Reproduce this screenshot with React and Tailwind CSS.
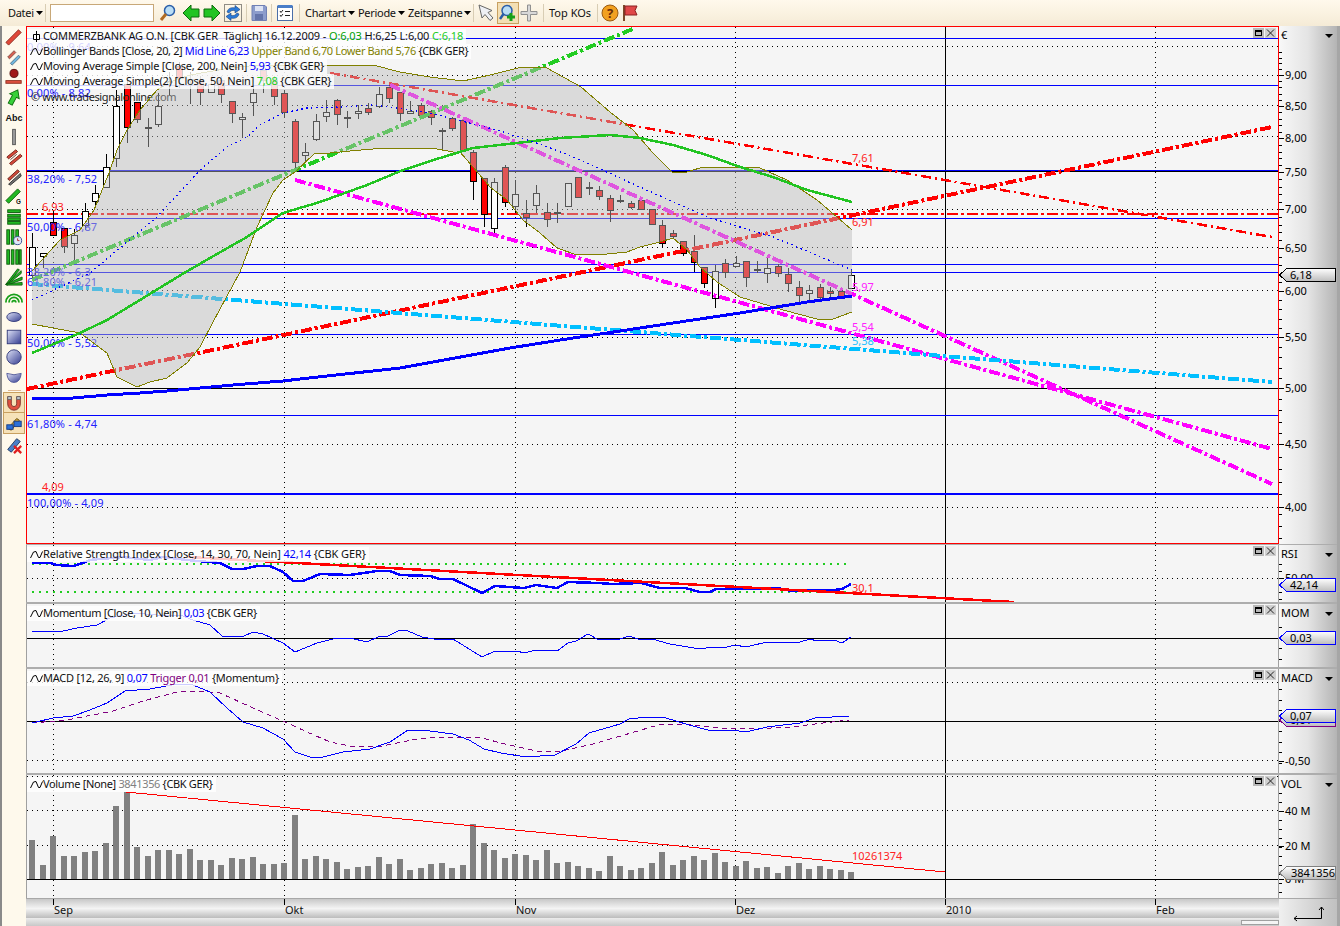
import React from 'react';

// one bar every 10.5px, first one at x=32
const barX = (i) => Math.round(32 + i * 10.5);

// top, bottom, high, low, kind (w white, r red, d doji)
const candles = [
  [247,275,233,280,'w'],[253,256,253,268,'w'],[222,235,210,235,'r'],[228,246,228,253,'r'],[235,243,229,260,'w'],
  [211,225,203,230,'w'],[193,201,185,207,'w'],[167,187,154,187,'w'],[106,158,90,167,'w'],[84,127,80,143,'r'],
  [102,119,102,123,'r'],[128,128,118,147,'d'],[106,124,93,127,'w'],[82,82,72,95,'d'],[66,78,62,88,'r'],
  [80,80,72,104,'d'],[80,92,76,105,'r'],[84,92,80,93,'w'],[80,94,76,103,'r'],[101,113,101,123,'r'],
  [117,119,113,138,'w'],[93,102,85,116,'w'],[70,80,64,93,'r'],[80,96,76,105,'r'],[93,112,90,117,'r'],
  [121,162,119,172,'r'],[152,155,143,162,'w'],[121,139,114,141,'w'],[112,116,100,122,'w'],[100,114,99,125,'r'],
  [118,118,111,128,'d'],[111,113,105,119,'w'],[108,112,103,115,'r'],[94,106,87,108,'w'],[87,98,85,103,'r'],
  [92,113,92,121,'r'],[111,113,101,113,'w'],[105,115,103,118,'r'],[111,117,110,125,'r'],[131,131,128,151,'d'],
  [118,128,117,131,'r'],[120,150,120,151,'r'],[152,181,150,200,'r'],[178,214,178,227,'r'],[182,228,178,236,'w'],
  [167,202,165,207,'r'],[194,206,180,213,'w'],[213,217,200,227,'r'],[193,205,185,213,'w'],[212,219,203,227,'r'],
  [213,213,203,223,'d'],[183,206,183,206,'w'],[177,197,177,197,'r'],[188,188,182,195,'d'],[190,196,186,200,'r'],
  [198,210,195,222,'r'],[201,201,195,203,'d'],[203,207,201,209,'r'],[200,209,199,209,'r'],[209,224,209,225,'r'],
  [225,243,220,248,'r'],[233,236,230,238,'r'],[241,253,241,256,'r'],[251,262,235,272,'r'],[267,283,267,288,'r'],
  [271,298,265,308,'w'],[263,272,259,278,'r'],[263,266,256,267,'w'],[261,277,261,287,'r'],[270,270,261,273,'d'],
  [268,273,258,283,'w'],[266,273,264,277,'r'],[274,283,268,292,'r'],[287,295,281,302,'r'],[290,293,285,303,'w'],
  [287,297,284,301,'r'],[291,293,287,300,'r'],[291,296,287,298,'r'],[275,288,270,288,'w'],
];

const volumeTops = [
  840,865,836,856,856,852,851,843,806,792,847,856,850,850,854,849,860,860,865,858,
  859,857,864,864,863,815,859,856,859,862,869,867,866,857,864,859,870,868,864,863,
  868,865,824,843,850,858,854,855,860,850,863,862,866,868,871,856,866,870,868,863,
  852,865,860,856,860,853,862,866,861,868,867,873,866,863,869,866,869,870,872,
];

const upperBand = '32,271 60,240 80,230 94,210 109,173 117,150 127,130 140,110 157,90 170,82 190,75 230,68 258,65 300,65 373,65 400,72 430,77 463,81 490,75 522,67 547,68 581,87 610,112 633,130 653,153 672,172 687,172 703,167 733,167 760,168 787,180 817,200 837,217 852,230';
const lowerBand = '32,324 53,328 80,333 107,353 117,377 137,387 150,382 167,378 187,363 200,347 213,322 240,272 257,227 273,193 283,180 295,172 315,153 330,153 350,151 373,149 397,148 432,148 453,152 460,152 473,167 490,187 507,200 523,220 540,233 557,248 577,255 607,254 627,252 640,247 660,242 673,238 687,250 700,267 717,282 740,297 760,303 783,310 817,319 833,319 852,312';
const ma200 = '32,398 53,399 73,398 107,395 140,393 167,391 200,388 233,385 283,381 300,379 400,368 510,348 573,338 607,333 673,323 740,313 807,302 852,296';
const ma50 = '32,353 80,333 107,320 140,300 184,273 224,250 247,237 283,213 320,202 367,185 403,170 440,158 473,148 517,143 560,138 610,135 640,138 673,145 707,155 740,167 773,177 807,190 852,202';
const midLine = '32,300 90,273 157,217 200,170 227,147 247,137 260,125 283,113 307,108 340,107 373,105 397,108 430,113 497,130 543,145 580,160 640,187 707,217 773,237 852,270';
const rsiLine = '32,563 50,563 57,565 73,566 83,563 90,560 100,559 123,557 150,560 163,557 187,560 220,563 232,569 243,569 257,566 270,566 283,572 293,581 303,581 320,574 350,575 377,571 390,571 400,575 430,576 440,579 453,579 482,593 495,586 524,588 536,585 557,588 568,582 599,583 612,584 641,583 660,588 685,588 700,592 710,592 716,589 777,588 792,591 834,590 842,589 851,584';
const momLine = '32,631 63,631 77,628 97,625 110,618 133,613 157,615 180,615 193,620 210,625 222,636 242,637 253,632 263,634 283,643 295,652 317,643 337,638 350,638 367,642 378,637 388,636 400,630 408,631 422,637 440,640 453,639 482,657 495,651 517,651 524,653 536,650 557,651 568,643 576,641 588,634 599,640 620,639 629,636 641,640 652,639 670,644 700,649 712,647 727,647 735,645 746,647 767,642 777,643 800,642 810,639 817,641 834,640 842,643 851,637';
const macdLine = '32,723 53,718 73,716 90,710 107,703 125,691 150,689 177,684 193,685 210,692 227,708 243,722 263,728 283,739 295,752 310,757 323,757 343,752 370,749 390,742 408,730 430,731 453,734 469,740 484,749 501,753 526,757 555,755 576,744 589,733 620,724 629,719 647,717 666,718 689,725 708,730 731,730 746,732 767,727 800,723 815,718 849,716';
const macdTrigger = '32,723 67,720 113,711 143,701 177,692 200,691 220,693 253,708 283,721 307,732 330,742 350,746 377,747 417,739 440,737 478,737 505,744 536,751 562,751 593,744 631,733 658,725 685,724 719,728 750,729 792,727 823,723 849,720';

const MONTHS = [53, 284, 515, 735, 1155];
const DASH_DOT = '11 3 3 3';

function PolyLine({ pts, c, w = 1, dash }) {
  return <polyline points={pts} fill="none" stroke={c} strokeWidth={w} strokeDasharray={dash} shapeRendering="crispEdges" />;
}

function Seg({ x1, y1, x2, y2, c = '#000', w = 1, dash }) {
  return <line x1={x1} y1={y1} x2={x2} y2={y2} stroke={c} strokeWidth={w} strokeDasharray={dash} shapeRendering="crispEdges" />;
}

function Label({ x, y, c, className, children }) {
  return <text x={x} y={y} fill={c} className={className}>{children}</text>;
}

// dotted rows plus the month columns, shared by all panes
function Grid({ rows, top, bottom }) {
  return (
    <g>
      {rows.map((y) => <Seg key={y} x1={27} y1={y + 0.5} x2={1278} y2={y + 0.5} dash="1 4" />)}
      {MONTHS.map((x) => <Seg key={x} x1={x + 0.5} y1={top} x2={x + 0.5} y2={bottom} dash="1 4" />)}
      <Seg x1={945.5} y1={top} x2={945.5} y2={bottom} />
    </g>
  );
}

function Candle({ data, i }) {
  const [top, bot, hi, lo, kind] = data;
  const x = barX(i);
  if (kind === 'd') {
    return (
      <g>
        <Seg x1={x + 0.5} y1={hi} x2={x + 0.5} y2={lo} />
        <rect x={x - 3} y={top - 1} width={7} height={2} fill="#000" shapeRendering="crispEdges" />
      </g>
    );
  }
  return (
    <g>
      <Seg x1={x + 0.5} y1={hi} x2={x + 0.5} y2={lo} />
      <rect x={x - 2.5} y={top + 0.5} width={6} height={bot - top} fill={kind === 'r' ? '#ff0000' : '#ffffff'} stroke="#000" shapeRendering="crispEdges" />
    </g>
  );
}

function MainChart() {
  const blueRows = [38.5, 85.5, 170.5, 218.5, 264.5, 272.5, 334.5, 415.5];
  const fib = 'tracking-[0.15px]';
  return (
    <svg viewBox="27 27 1251 516" className="block w-full h-full text-[11px]">
      <Grid rows={[46, 75, 105, 136, 209, 247, 290, 337, 444, 507]} top={27} bottom={543} />
      {blueRows.map((y) => <Seg key={y} x1={27} y1={y} x2={1278} y2={y} c="#0000ff" />)}
      <Seg x1={27} y1={171.5} x2={1278} y2={171.5} />
      <Seg x1={27} y1={388.5} x2={1278} y2={388.5} />
      <Seg x1={27} y1={493.5} x2={1278} y2={493.5} c="#0000ff" w={2} />
      <Seg x1={27} y1={214} x2={1278} y2={214} c="#ff0000" w={2.5} dash={DASH_DOT} />

      {candles.map((d, i) => <Candle key={i} data={d} i={i} />)}

      <Seg x1={32} y1={280} x2={635} y2={28} c="#22cc22" w={4} dash={DASH_DOT} />
      <Seg x1={27} y1={389} x2={1272} y2={127} c="#ff0000" w={4} dash={DASH_DOT} />
      <Seg x1={330} y1={73} x2={1272} y2={237} c="#ff0000" w={2.5} dash="10 4 2 4" />
      <Seg x1={390} y1={85} x2={1272} y2={484} c="#ff00ff" w={4} dash={DASH_DOT} />
      <Seg x1={295} y1={180} x2={1272} y2={449} c="#ff00ff" w={4} dash={DASH_DOT} />
      <Seg x1={32} y1={284} x2={1272} y2={382} c="#00bfff" w={4} dash={DASH_DOT} />

      <Label x={27} y={51} c="#2222ff" className={fib}>0,00% - 9,64</Label>
      <Label x={27} y={97} c="#2222ff" className={fib}>0,00% - 8,82</Label>
      <Label x={31} y={101} c="#222222" className="tracking-[-0.4px]">© www.tradesignalonline.com</Label>
      <Label x={27} y={183} c="#2222ff" className={fib}>38,20% - 7,52</Label>
      <Label x={27} y={231} c="#2222ff" className={fib}>50,00% - 6,87</Label>
      <Label x={27} y={276} c="#2222ff" className={fib}>38,20% - 6,3</Label>
      <Label x={27} y={286} c="#2222ff" className={fib}>61,80% - 6,21</Label>
      <Label x={27} y={347} c="#2222ff" className={fib}>50,00% - 5,52</Label>
      <Label x={27} y={428} c="#2222ff" className={fib}>61,80% - 4,74</Label>
      <Label x={27} y={507} c="#2222ff" className={fib}>100,00% - 4,09</Label>
      <Label x={42} y={211} c="#ff2222">6,93</Label>
      <Label x={42} y={491} c="#ff2222">4,09</Label>
      <Label x={852} y={162} c="#ff2222">7,61</Label>
      <Label x={852} y={226} c="#ff2222">6,91</Label>
      <Label x={852} y={291} c="#ff22ff">5,97</Label>
      <Label x={852} y={331} c="#ff22ff">5,54</Label>
      <Label x={852} y={345} c="#22bfff">5,38</Label>

      {/* band sits over candles and trend lines, which is what mutes the colours inside it */}
      <polygon points={`${upperBand} ${lowerBand.split(' ').reverse().join(' ')}`} fill="#b9b9b9" fillOpacity="0.46" />
      <PolyLine pts={upperBand} c="#808000" />
      <PolyLine pts={lowerBand} c="#808000" />

      {/* the averages stay vivid on top of the band */}
      <PolyLine pts={ma200} c="#0000ff" w={3} />
      <PolyLine pts={ma50} c="#22c422" w={2.5} />
      <PolyLine pts={midLine} c="#0000ff" w={1.3} dash="1.5 3.5" />
    </svg>
  );
}

function RsiChart() {
  return (
    <svg viewBox="27 545 1251 57" className="block w-full h-full text-[11px]">
      <Grid rows={[578]} top={545} bottom={602} />
      <Seg x1={32} y1={564} x2={846} y2={564} c="#22cc22" w={2} dash="2 5" />
      <Seg x1={32} y1={592} x2={846} y2={592} c="#22cc22" w={2} dash="2 5" />
      <PolyLine pts={rsiLine} c="#0000ff" w={2.5} />
      <Seg x1={187} y1={557} x2={1014} y2={602} c="#ff0000" w={2.5} />
      <Label x={852} y={592} c="#ff2222">30,1</Label>
    </svg>
  );
}

function MomentumChart() {
  return (
    <svg viewBox="27 604 1251 63" className="block w-full h-full">
      <Grid rows={[]} top={604} bottom={667} />
      <Seg x1={27} y1={638.5} x2={1278} y2={638.5} />
      <PolyLine pts={momLine} c="#0000ff" />
    </svg>
  );
}

function MacdChart() {
  return (
    <svg viewBox="27 669 1251 104" className="block w-full h-full">
      <Grid rows={[682, 760]} top={669} bottom={773} />
      <Seg x1={27} y1={721.5} x2={1278} y2={721.5} />
      <PolyLine pts={macdTrigger} c="#800080" dash="5 4" />
      <PolyLine pts={macdLine} c="#0000ff" />
    </svg>
  );
}

function VolumeChart() {
  return (
    <svg viewBox="27 775 1251 123" className="block w-full h-full text-[11px]">
      <Grid rows={[776, 810, 845]} top={775} bottom={898} />
      {volumeTops.map((y, i) => (
        <rect key={i} x={barX(i) - 3} y={y} width={6} height={880 - y} fill="#808080" shapeRendering="crispEdges" />
      ))}
      <Seg x1={27} y1={879.5} x2={1278} y2={879.5} />
      <Seg x1={126} y1={792} x2={945} y2={872} c="#ff0000" w={1} />
      <Label x={852} y={860} c="#ff2222">10261374</Label>
    </svg>
  );
}

function WaveIcon() {
  return (
    <svg viewBox="0 0 13 9" className="w-[13px] h-[9px] shrink-0">
      <path d="M0.5 8 L3.5 2 L6 1.5 L8.5 7.5 L10 7.5 L12.5 1.5" fill="none" stroke="#000" />
    </svg>
  );
}

function LegendRow({ candle, tracking, children }) {
  return (
    <div className={`flex items-center h-[15px] px-[3px] bg-white/80 whitespace-nowrap text-[#111] ${tracking}`}>
      {candle ? (
        <svg viewBox="0 0 13 11" className="w-[13px] h-[11px] shrink-0">
          <path d="M6.5 0 V11 M3.5 3.5 H9.5 V8.5 H3.5 Z" fill="#fff" stroke="#000" />
        </svg>
      ) : (
        <WaveIcon />
      )}
      <span className="whitespace-pre">{children}</span>
    </div>
  );
}

function Legend({ children }) {
  return <div className="absolute top-[2px] left-0 flex flex-col items-start text-[11px]">{children}</div>;
}

function PaneButtons() {
  return (
    <div className="absolute top-[1px] right-[2px] flex gap-[1px]">
      <div className="w-[11px] h-[10px] bg-[#b8b8b8] flex items-center justify-center">
        <div className="w-[7px] h-[6px] border border-black border-t-2" />
      </div>
      <svg viewBox="0 0 11 10" className="w-[11px] h-[10px] bg-[#d0d0d0]">
        <path d="M2 1.5 L9 8.5 M9 1.5 L2 8.5" stroke="#222" />
      </svg>
    </div>
  );
}

function Caret() {
  return (
    <svg viewBox="0 0 7 4" className="w-[7px] h-[4px] shrink-0">
      <path d="M0 0 H7 L3.5 4 Z" fill="#000" />
    </svg>
  );
}

// scale on the right of a pane, drawn in page coordinates like the charts
function Axis({ top, height, title, titleY, labels = [], ticks = [], tags = [], gradId }) {
  return (
    <div className="relative w-[58px] shrink-0 bg-gradient-to-r from-[#f8f8f8] via-[#e4e4e4] to-[#b4b4b4]">
      <svg viewBox={`1279 ${top} 58 ${height}`} className="block w-full h-full text-[11px]">
        <defs>
          <linearGradient id={gradId} x1="0" y1="0" x2="0" y2="1">
            <stop offset="0" stopColor="#ffffff" />
            <stop offset="1" stopColor="#bcbcbc" />
          </linearGradient>
        </defs>
        {ticks.map((y, i) => <Seg key={i} x1={1279} y1={y + 0.5} x2={1282} y2={y + 0.5} />)}
        {labels.map(([y, t]) => (
          <g key={t}>
            <Seg x1={1279} y1={y + 0.5} x2={1284} y2={y + 0.5} />
            <text x={1285} y={y + 4} fill="#000">{t}</text>
          </g>
        ))}
        <text x={1281} y={titleY} fill="#000">{title}</text>
        <path d="M1325 32 h8 l-4 4 z" transform={`translate(0 ${titleY - 37})`} fill="#000" />
        {tags.map((t) => (
          <g key={t.text}>
            <polygon
              points={`1279.5,${t.y + 7} 1286.5,${t.y + 0.5} 1335.5,${t.y + 0.5} 1335.5,${t.y + 13.5} 1286.5,${t.y + 13.5}`}
              fill={`url(#${gradId})`}
              stroke={t.c}
              shapeRendering="crispEdges"
            />
            <text x={t.x || 1290} y={t.y + 11} fill="#000">{t.text}</text>
          </g>
        ))}
      </svg>
    </div>
  );
}

function Pane({ height, border, axis, children }) {
  return (
    <div className="flex" style={{ height }}>
      <div className={`relative flex-1 min-w-0 bg-[#f5f5f5] ${border}`}>
        {children}
        <PaneButtons />
      </div>
      {axis}
    </div>
  );
}

function Sep({ className }) {
  return <div className={`w-full bg-[#adadad] ${className}`} />;
}

function spread(a, step, n) {
  return Array.from({ length: n }, (_, i) => a + i * step);
}

function mainTicks() {
  const major = [46, 75, 106, 138, 172, 209, 248, 291, 337, 388, 444, 507];
  const out = [];
  major.slice(0, -1).forEach((y, i) => {
    const d = (major[i + 1] - y) / 5;
    for (let k = 1; k < 5; k++) out.push(Math.round(y + d * k));
  });
  return out.concat([514, 526, 538]);
}

// --- toolbar drawings ---

function TB({ ml, w = 'w-[18px]', active, children }) {
  return (
    <div className={`${ml} ${w} h-[22px] shrink-0 flex items-center justify-center ${active ? 'bg-[#f3dfb4] border border-[#c8a060]' : ''}`}>
      <svg viewBox="0 0 18 18" className="w-[18px] h-[18px]">{children}</svg>
    </div>
  );
}

function TBSep({ ml }) {
  return <div className={`${ml} w-[1px] h-[18px] shrink-0 bg-[#d8cdb4]`} />;
}

function MenuItem({ ml, w, children }) {
  return (
    <div className={`${ml} ${w} shrink-0 flex items-center gap-[2px] whitespace-nowrap tracking-[-0.3px]`}>
      <span>{children}</span>
      <Caret />
    </div>
  );
}

function Toolbar() {
  return (
    <div className="flex items-center h-[26px] pl-[8px] bg-gradient-to-b from-[#fff9ec] to-[#f5ebd6] text-[11px] text-[#111]">
      <MenuItem ml="ml-0" w="w-[31px]">Datei</MenuItem>
      <TBSep ml="ml-[6px]" />
      <input className="ml-[4px] w-[104px] h-[18px] shrink-0 bg-white border border-[#c8a878]" />
      <TB ml="ml-[5px]">
        <circle cx="10.5" cy="6.5" r="5" fill="#b9ddf5" stroke="#2a5ea8" strokeWidth="1.5" />
        <path d="M7 10 L2 16" stroke="#b06a20" strokeWidth="3" />
      </TB>
      <TB ml="ml-[5px]">
        <path d="M1 9 L9 1 V5 H17 V13 H9 V17 Z" fill="#22c422" stroke="#0c6a0c" />
      </TB>
      <TB ml="ml-[3px]">
        <path d="M17 9 L9 1 V5 H1 V13 H9 V17 Z" fill="#22c422" stroke="#0c6a0c" />
      </TB>
      <TB ml="ml-[3px]">
        <rect x="0.5" y="0.5" width="17" height="17" fill="none" stroke="#222" strokeDasharray="1 1" />
        <path d="M3 8 C4 4 8 3 11 4 V1.5 L16 5.5 L11 9 V6.5 C8 6 6 7 5 9 Z" fill="#2a7ad8" stroke="#123f80" strokeWidth="0.6" />
        <path d="M15 10 C14 14 10 15 7 14 V16.5 L2 12.5 L7 9 V11.5 C10 12 12 11 13 9 Z" fill="#2a7ad8" stroke="#123f80" strokeWidth="0.6" />
      </TB>
      <TBSep ml="ml-[4px]" />
      <TB ml="ml-[3px]">
        <path d="M2 1.5 H15 L16.5 3 V16.5 H2 Z" fill="#8c9ccc" stroke="#7080b4" />
        <rect x="5" y="2" width="8" height="5" fill="#dde3f4" />
        <rect x="5" y="10" width="8" height="6" fill="#6474aa" />
      </TB>
      <TBSep ml="ml-[3px]" />
      <TB ml="ml-[4px]">
        <rect x="1.5" y="2.5" width="15" height="14" fill="#fff" stroke="#4a6ea8" />
        <rect x="1.5" y="1" width="15" height="3" fill="#4a7ec8" />
        <path d="M4 7 L5 8.5 L7 6 M4 11 L5 12.5 L7 10 M9 7.5 H14 M9 11.5 H14" fill="none" stroke="#222" />
      </TB>
      <TBSep ml="ml-[5px]" />
      <MenuItem ml="ml-[5px]" w="w-[48px]">Chartart</MenuItem>
      <MenuItem ml="ml-[5px]" w="w-[45px]">Periode</MenuItem>
      <MenuItem ml="ml-[5px]" w="w-[60px]">Zeitspanne</MenuItem>
      <TBSep ml="ml-[5px]" />
      <TB ml="ml-[3px]">
        <path d="M2 1 L5 14 L8 10.5 L13 16.5 L16 14 L11 8.5 L15 6.5 Z" fill="#eef0f4" stroke="#666" />
      </TB>
      <TB ml="ml-[2px]" w="w-[22px]" active>
        <circle cx="8" cy="6.5" r="5" fill="#b9ddf5" stroke="#2a5ea8" strokeWidth="1.5" />
        <path d="M4.5 10 L1 15" stroke="#2a5ea8" strokeWidth="2.5" />
        <path d="M12 9 V17 M8 13 H16" stroke="#18a018" strokeWidth="3" />
      </TB>
      <TB ml="ml-[1px]">
        <path d="M7.5 1 H10.5 V7.5 H17 V10.5 H10.5 V17 H7.5 V10.5 H1 V7.5 H7.5 Z" fill="#d8d8d8" stroke="#909090" />
      </TB>
      <TBSep ml="ml-[5px]" />
      <div className="ml-[5px] w-[44px] shrink-0 whitespace-nowrap">Top KOs</div>
      <TBSep ml="ml-[4px]" />
      <TB ml="ml-[3px]">
        <circle cx="9" cy="9" r="8" fill="#f2a020" stroke="#9a5a10" />
        <text x="9" y="13.5" textAnchor="middle" fontSize="13" fontWeight="700" fill="#6a2c08">?</text>
      </TB>
      <TB ml="ml-[2px]">
        <path d="M3 1 V17" stroke="#7a4a2a" strokeWidth="2" />
        <path d="M4 2 H16 L14 6.5 L16 11 H4 Z" fill="#e04848" stroke="#8a2020" />
      </TB>
    </div>
  );
}

// --- left tool column ---

const greenBar = { fill: '#22b822', stroke: '#0c5c0c' };

const sideTools = [
  <polygon points="1,16 15,2 18,5 4,19" fill="#e04838" stroke="#8a2a20" />,
  <g>
    <polygon points="3,10 10,3 12,5 5,12" fill="#d86050" stroke="#805048" />
    <polygon points="6,17 15,8 17,10 8,19" fill="#70b8e0" stroke="#507088" />
  </g>,
  <g>
    <circle cx="10" cy="6" r="4.5" fill="#a01818" stroke="#501010" />
    <rect x="1" y="14" width="17" height="3" fill="#e05040" stroke="#903020" />
  </g>,
  <path d="M10 1 L16 9 H12.5 V19 H7.5 V9 H4 Z" transform="rotate(28 10 10)" fill="#38d038" stroke="#0c6a0c" />,
  <text x="10" y="14" textAnchor="middle" fontSize="10" fontWeight="700" fill="#111">Abc</text>,
  <rect x="8.5" y="1.5" width="3" height="17" fill="#a0a0a0" stroke="#505050" />,
  <g>
    <polygon points="2,10 12,2 14,4 4,12" fill="#d84838" stroke="#702018" />
    <polygon points="5,17 17,7 19,9 7,19" fill="#d84838" stroke="#702018" />
    <path d="M6 13 L13 7" stroke="#603030" />
  </g>,
  <g>
    <polygon points="3,12 14,2 16,4 5,14" fill="#d04838" stroke="#602018" />
    <polygon points="4,18 17,6 18,9 6,19" fill="#707070" stroke="#303030" />
  </g>,
  <g>
    <polygon points="1,14 14,1 17,4 4,17" {...greenBar} />
    <text x="15" y="18" textAnchor="middle" fontSize="7" fontWeight="700" fill="#111">G</text>
  </g>,
  <g>
    <rect x="3" y="2" width="14" height="3" {...greenBar} />
    <rect x="3" y="7" width="14" height="3" {...greenBar} />
    <rect x="3" y="11" width="14" height="3" {...greenBar} />
    <rect x="3" y="15" width="14" height="3" {...greenBar} />
  </g>,
  <g>
    <rect x="2" y="2" width="3" height="16" {...greenBar} />
    <rect x="7" y="2" width="3" height="16" {...greenBar} />
    <rect x="12" y="2" width="3" height="10" {...greenBar} />
    <circle cx="14" cy="14" r="4.5" fill="#e0e8f8" stroke="#304a90" />
    <path d="M14 11.5 V14 H16" fill="none" stroke="#b02020" />
  </g>,
  <g>
    <rect x="2" y="2" width="3" height="16" {...greenBar} />
    <rect x="7" y="2" width="3" height="16" {...greenBar} />
    <rect x="12" y="2" width="3" height="16" {...greenBar} />
    <rect x="16" y="2" width="2" height="16" {...greenBar} />
  </g>,
  <g>
    <polygon points="1,18 18,3 18,6 2,19" {...greenBar} />
    <polygon points="1,18 14,1 16,2 2,19" {...greenBar} />
    <polygon points="1,18 19,10 19,13 2,19" {...greenBar} />
    <polygon points="1,18 19,16 19,19 2,19" {...greenBar} />
  </g>,
  <g fill="none" stroke="#18a018" strokeWidth="2">
    <path d="M1 16 A9 9 0 0 1 19 16" />
    <path d="M4.5 16 A5.5 5.5 0 0 1 15.5 16" />
    <path d="M8 16 A2 2 0 0 1 12 16" />
  </g>,
  <g>
    <defs>
      <linearGradient id="shapeFill" x1="0" y1="0" x2="1" y2="1">
        <stop offset="0" stopColor="#e0e4f8" />
        <stop offset="1" stopColor="#343c90" />
      </linearGradient>
    </defs>
    <ellipse cx="10" cy="10" rx="8" ry="5" fill="url(#shapeFill)" stroke="#303878" />
  </g>,
  <rect x="2.5" y="2.5" width="15" height="15" fill="url(#shapeFill)" stroke="#303878" />,
  <circle cx="10" cy="10" r="8" fill="url(#shapeFill)" stroke="#303878" />,
  <path d="M2 6 Q10 9 18 6 Q17 16 10 16 Q3 16 2 6 Z" fill="url(#shapeFill)" stroke="#505898" />,
];

function SideTool({ active, children }) {
  return (
    <div className={`w-[20px] h-[20px] flex items-center justify-center ${active ? 'bg-[#f6e2b8] outline outline-1 outline-[#c8a060]' : ''}`}>
      <svg viewBox="0 0 20 20" className="w-[18px] h-[18px]">{children}</svg>
    </div>
  );
}

function SideBar() {
  return (
    <div className="w-[26px] shrink-0 flex flex-col items-center pt-[1px] bg-[#fef9ec] border-l-2 border-[#8a8a8a] font-['Liberation_Sans',sans-serif]">
      {sideTools.map((t, i) => <SideTool key={i}>{t}</SideTool>)}
      <div className="w-[13px] h-[1px] mt-[3px] mb-[2px] bg-[#e0b890]" />
      <SideTool active>
        <path d="M3 3 H7 V11 A3 3 0 0 0 13 11 V3 H17 V11 A7 7 0 0 1 3 11 Z" fill="#e05040" stroke="#7a3028" />
        <path d="M3 3 H7 V6 H3 Z M13 3 H17 V6 H13 Z" fill="#c8d0d8" stroke="#606060" />
      </SideTool>
      <SideTool active>
        <polygon points="3,16 13,5 16,7 7,18" fill="#d8a830" stroke="#604810" />
        <rect x="10" y="8" width="8" height="6" fill="#2a70d8" stroke="#143a80" />
        <rect x="2" y="12" width="7" height="5" fill="#2a70d8" stroke="#143a80" />
      </SideTool>
      <div className="mt-[2px]">
        <SideTool>
          <polygon points="3,15 13,3 17,6 7,18" fill="#4a80c8" stroke="#203860" />
          <path d="M10 11 L18 19 M18 11 L10 19" stroke="#e02020" strokeWidth="2.5" />
        </SideTool>
      </div>
    </div>
  );
}

function TimeAxis() {
  const marks = [[53, 'Sep'], [284, 'Okt'], [515, 'Nov'], [735, 'Dez'], [945, '2010'], [1155, 'Feb']];
  return (
    <div className="h-[19px] bg-gradient-to-b from-[#c8c8c8] via-[#f4f4f4] to-[#bcbcbc]">
      <svg viewBox="27 898 1251 19" className="block w-full h-full text-[11px]">
        {marks.map(([x, t]) => (
          <g key={t}>
            <Seg x1={x + 0.5} y1={898} x2={x + 0.5} y2={904} />
            <text x={x + 1} y={913} fill="#111">{t}</text>
          </g>
        ))}
      </svg>
    </div>
  );
}

export default function App() {
  return (
    <div className="w-[1340px] h-[926px] overflow-hidden flex flex-col bg-[#fef9ec] font-['Noto_Sans',sans-serif]">
      <Toolbar />
      <div className="flex flex-1 min-h-0">
        <SideBar />
        <div className="flex-1 min-w-0 flex">
          <div className="flex-1 min-w-0 flex flex-col">
            <Pane
              height={518}
              border="border border-[#ff0000]"
              axis={
                <Axis
                  gradId="tagMain" top={26} height={518} title="€" titleY={39}
                  labels={[[75,'9,00'],[106,'8,50'],[138,'8,00'],[172,'7,50'],[209,'7,00'],[248,'6,50'],[291,'6,00'],[337,'5,50'],[388,'5,00'],[444,'4,50'],[507,'4,00']]}
                  ticks={mainTicks()}
                  tags={[{ y: 268, text: '6,18', c: '#000' }]}
                />
              }
            >
              <MainChart />
              <Legend>
                <LegendRow candle tracking="tracking-[-0.11px]">
                  COMMERZBANK AG O.N. [CBK GER  Täglich] 16.12.2009 - <span className="text-[#00a000]">O:6,03</span> H:6,25 L:6,00 <span className="text-[#22cc22]">C:6,18</span>
                </LegendRow>
                <LegendRow tracking="tracking-[-0.36px]">
                  Bollinger Bands [Close, 20, 2] <span className="text-[#0000ff]">Mid Line 6,23</span> <span className="text-[#808000]">Upper Band 6,70 Lower Band 5,76</span> {'{CBK GER}'}
                </LegendRow>
                <LegendRow tracking="tracking-[-0.25px]">
                  Moving Average Simple [Close, 200, Nein] <span className="text-[#0000ff]">5,93</span> {'{CBK GER}'}
                </LegendRow>
                <LegendRow tracking="tracking-[-0.23px]">
                  Moving Average Simple(2) [Close, 50, Nein] <span className="text-[#22cc22]">7,08</span> {'{CBK GER}'}
                </LegendRow>
              </Legend>
            </Pane>
            <Sep className="h-[1px]" />
            <Pane
              height={57}
              border="border-x border-[#a0a0a0]"
              axis={
                <Axis
                  gradId="tagRsi" top={545} height={57} title="RSI" titleY={558}
                  labels={[[578, '50,00']]}
                  ticks={[564, 571, 585, 592, 599]}
                  tags={[{ y: 578, text: '42,14', c: '#0000ff' }]}
                />
              }
            >
              <RsiChart />
              <Legend>
                <LegendRow tracking="tracking-[-0.12px]">
                  Relative Strength Index [Close, 14, 30, 70, Nein] <span className="text-[#0000ff]">42,14</span> {'{CBK GER}'}
                </LegendRow>
              </Legend>
            </Pane>
            <Sep className="h-[2px]" />
            <Pane
              height={63}
              border="border-x border-[#a0a0a0]"
              axis={
                <Axis
                  gradId="tagMom" top={604} height={63} title="MOM" titleY={617}
                  ticks={[627, 648, 659]}
                  tags={[{ y: 631, text: '0,03', c: '#0000ff' }]}
                />
              }
            >
              <MomentumChart />
              <Legend>
                <LegendRow tracking="tracking-[-0.35px]">
                  Momentum [Close, 10, Nein] <span className="text-[#0000ff]">0,03</span> {'{CBK GER}'}
                </LegendRow>
              </Legend>
            </Pane>
            <Sep className="h-[2px]" />
            <Pane
              height={104}
              border="border-x border-[#a0a0a0]"
              axis={
                <Axis
                  gradId="tagMacd" top={669} height={104} title="MACD" titleY={682}
                  labels={[[761, '-0,50']]}
                  ticks={spread(689, 10.5, 8).map(Math.round)}
                  tags={[
                    { y: 713, text: '0,01', c: '#800080' },
                    { y: 709, text: '0,07', c: '#0000ff' },
                  ]}
                />
              }
            >
              <MacdChart />
              <Legend>
                <LegendRow tracking="tracking-[-0.24px]">
                  MACD [12, 26, 9] <span className="text-[#0000ff]">0,07</span> <span className="text-[#800080]">Trigger 0,01</span> {'{Momentum}'}
                </LegendRow>
              </Legend>
            </Pane>
            <Sep className="h-[2px]" />
            <Pane
              height={123}
              border="border-x border-[#a0a0a0]"
              axis={
                <Axis
                  gradId="tagVol" top={775} height={123} title="VOL" titleY={788}
                  labels={[[811, '40 M'], [846, '20 M'], [879, '0 M']]}
                  ticks={spread(793, 9, 12).map(Math.round)}
                  tags={[{ y: 866, text: '3841356', c: '#808080', x: 1291 }]}
                />
              }
            >
              <VolumeChart />
              <Legend>
                <LegendRow tracking="tracking-[-0.34px]">
                  Volume [None] <span className="text-[#808080]">3841356</span> {'{CBK GER}'}
                </LegendRow>
              </Legend>
            </Pane>
            <div className="flex flex-1 min-h-0">
              <div className="flex-1 min-w-0 flex flex-col border-t border-[#a8a8a8]">
                <TimeAxis />
                <div className="flex-1 flex items-center justify-end bg-gradient-to-b from-[#ececec] to-[#c8c8c8]">
                  <div className="w-[38px] h-[5px] border border-[#a0a0a0] bg-[#f4f4f4]" />
                </div>
              </div>
              <div className="w-[58px] shrink-0 border-t border-[#a8a8a8] bg-gradient-to-r from-[#f0f0f0] to-[#c0c0c0] flex items-center justify-center">
                <svg viewBox="0 0 32 18" className="w-[32px] h-[18px] mt-[2px]">
                  <path d="M2 13.5 H29.5 V2 M5 11 L2 13.5 L5 16 M27 5 L29.5 2 L32 5" fill="none" stroke="#000" />
                </svg>
              </div>
            </div>
          </div>
          <div className="w-[3px] shrink-0 bg-[#a6a6a6]" />
        </div>
      </div>
    </div>
  );
}
